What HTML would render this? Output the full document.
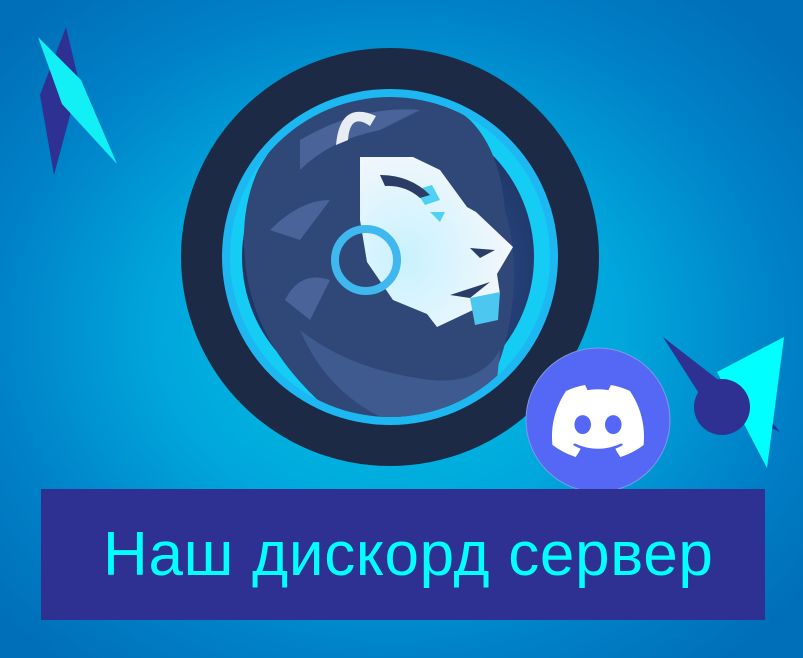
<!DOCTYPE html>
<html><head><meta charset="utf-8"><style>
html,body{margin:0;padding:0}
body{width:803px;height:658px;overflow:hidden;position:relative;
background:radial-gradient(ellipse 520px 430px at 390px 330px,#00c6e6 0%,#00a6dc 45%,#0082c8 75%,#006fb9 100%);}
.t{position:absolute;left:41px;top:489px;width:724px;height:131px;background:#2e3192;}
.t span{position:absolute;left:62px;top:31px;font-family:"Liberation Sans",sans-serif;font-size:62px;color:#00ffff;letter-spacing:0.7px;white-space:nowrap;line-height:70px}
svg{position:absolute;left:0;top:0}
</style></head><body>
<svg width="803" height="658" viewBox="0 0 803 658">
<defs>
<radialGradient id="ig" cx="0.55" cy="0.55" r="0.6"><stop offset="0" stop-color="#3a78d0"/><stop offset="0.6" stop-color="#24427c"/><stop offset="1" stop-color="#1e3058"/></radialGradient>
<radialGradient id="hg" cx="0.3" cy="0.6" r="0.7"><stop offset="0" stop-color="#c8f2ff"/><stop offset="1" stop-color="#f4f7fb"/></radialGradient>
<clipPath id="cc"><circle cx="390" cy="257" r="160"/></clipPath>
</defs>
<polygon points="66,27 79,82 54,175 40,95" fill="#2e3192"/>
<polygon points="38,37 81,80 117,164 62,104" fill="#12f0f5"/>
<polygon points="663,337 770,420 780,432 700,395" fill="#2e3192"/>
<polygon points="784,337 717,372 767,468" fill="#00ffff"/>
<circle cx="722" cy="407" r="28" fill="#2e3192"/>
<circle cx="390" cy="257" r="209" fill="#1c2a45"/>
<circle cx="390" cy="257" r="168" fill="#1db8f2"/>
<circle cx="390" cy="257" r="160" fill="#11d8f5" opacity="0.6"/>
<circle cx="388" cy="257" r="146" fill="url(#ig)"/>
<g clip-path="url(#cc)">
<path d="M258,170 Q300,95 370,90 Q430,85 470,120 Q500,150 505,210 Q520,260 510,320 Q500,380 470,410 Q440,430 400,430 Q420,450 440,475 L400,460 Q330,420 290,370 Q250,320 245,260 Q240,210 258,170Z" fill="#2f4878"/>
<path d="M300,140 Q360,105 420,110 L380,130 Q330,140 300,170Z M270,230 Q300,200 330,200 L300,240Z M285,300 Q300,270 330,280 L310,320Z" fill="#4a6499"/>
<path d="M300,330 Q350,370 430,380 Q480,385 500,350 L495,400 Q460,440 400,425 Q330,400 300,330Z" fill="#3f5a8e"/>
</g>
<path d="M336,145 Q340,100 376,116 L370,126 Q350,112 348,140Z" fill="#e8edf3"/>
<path d="M360,157 L413,157 L440,170 L467,207 L476,212 L513,247 L497,274 L500,294 L473,310 L437,327 L427,314 L393,300 L367,262 L360,220Z" fill="url(#hg)"/>
<path d="M415,190 L432,185 L440,200 L425,205Z M430,212 L445,212 L440,222Z" fill="#4fd0f5"/>
<path d="M380,175 Q410,175 430,195 L420,198 Q405,185 385,186Z M470,248 L495,250 L480,258Z M450,295 L490,282 L470,298Z" fill="#2b3d66"/>
<path d="M470,298 L500,292 L498,320 L475,325Z" fill="#4cc7f0"/>
<circle cx="366" cy="260" r="31" fill="none" stroke="#3fb8ef" stroke-width="8"/>
<circle cx="598" cy="420" r="72" fill="#5468f5" stroke="#7f9be0" stroke-width="1"/>
<svg x="552" y="385" width="92" height="72" viewBox="0 0 127.14 96.36" preserveAspectRatio="none">
<path fill="#fff" d="M107.7,8.07A105.15,105.15,0,0,0,81.47,0a72.06,72.06,0,0,0-3.36,6.83A97.68,97.68,0,0,0,49,6.83,72.37,72.37,0,0,0,45.640,0,105.89,105.89,0,0,0,19.39,8.09C2.79,32.65-1.710,56.6.54,80.21h0A105.73,105.73,0,0,0,32.71,96.36,77.7,77.7,0,0,0,39.6,85.25a68.42,68.42,0,0,1-10.850-5.18c.91-.66,1.8-1.34,2.66-2a75.57,75.57,0,0,0,64.32,0c.87.71,1.76,1.39,2.66,2a68.68,68.68,0,0,1-10.87,5.19,77,77,0,0,0,6.89,11.1A105.25,105.25,0,0,0,126.6,80.22h0C129.24,52.84,122.09,29.11,107.7,8.07ZM42.45,65.69C36.18,65.69,31,60,31,53s5-12.74,11.43-12.74S54,46,53.89,53,48.84,65.69,42.45,65.690Zm42.24,0C78.41,65.69,73.25,60,73.250,53s5-12.74,11.44-12.74S96.23,46,96.12,53,91.08,65.69,84.69,65.69Z"/>
</svg>
</svg>
<div class="t"><span>Наш дискорд сервер</span></div>
</body></html>
